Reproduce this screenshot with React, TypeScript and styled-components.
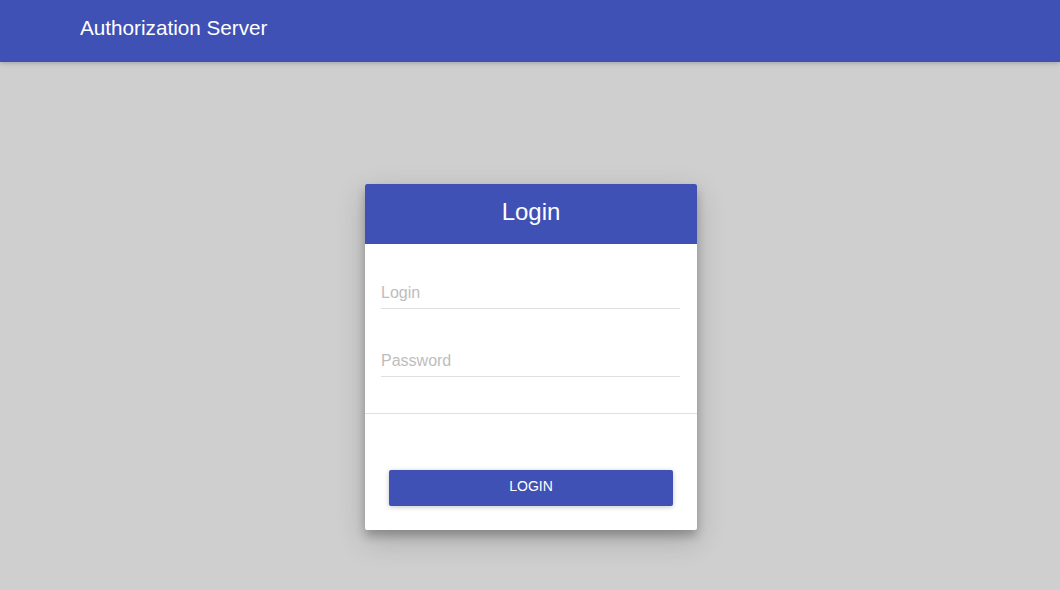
import React from "react";
import styled, { createGlobalStyle } from "styled-components";

const Global = createGlobalStyle`
  html, body { margin: 0; padding: 0; }
  body {
    background: #cfcfcf;
    font-family: "Liberation Sans", Arial, sans-serif;
  }
`;

const Page = styled.div`
  min-height: 590px;
  display: flex;
  flex-direction: column;
`;

const AppBar = styled.header`
  height: 62px;
  background: #3f51b5;
  box-shadow: 0 1px 6px rgba(0, 0, 0, 0.12), 0 1px 4px rgba(0, 0, 0, 0.12);
  display: flex;
  align-items: center;
  padding: 0 0 6px 80px;
  box-sizing: border-box;
`;

const AppTitle = styled.h1`
  margin: 0;
  font-size: 20.7px;
  font-weight: 400;
  color: #fff;
`;

const Main = styled.main`
  display: flex;
  justify-content: center;
  padding: 122px 0 0 2px;
`;

const Card = styled.div`
  width: 332px;
  background: #fff;
  border-radius: 2px;
  box-shadow: 0 10px 30px rgba(0, 0, 0, 0.19), 0 6px 10px rgba(0, 0, 0, 0.23);
  overflow: hidden;
`;

const CardHeader = styled.div`
  height: 60px;
  background: #3f51b5;
  color: #fff;
  font-size: 24px;
  display: flex;
  align-items: center;
  justify-content: center;
  padding-bottom: 4px;
  box-sizing: border-box;
`;

const Fields = styled.div`
  display: flex;
  flex-direction: column;
  gap: 20px;
  padding: 17px 17px 36px 16px;
`;

const Field = styled.label`
  height: 48px;
  display: flex;
  flex-direction: column;
  justify-content: flex-end;
  border-bottom: 1px solid #e0e0e0;
  box-sizing: border-box;
`;

const Input = styled.input`
  border: none;
  outline: none;
  padding: 0 0 3px 0;
  height: 24px;
  font-family: inherit;
  font-size: 16px;
  color: rgba(0, 0, 0, 0.87);
  background: transparent;
  &::placeholder {
    color: #bdbdbd;
  }
`;

const Divider = styled.hr`
  margin: 0;
  border: none;
  height: 1px;
  background: #e0e0e0;
`;

const Actions = styled.div`
  padding: 56px 24px 24px;
`;

const Button = styled.button`
  width: 100%;
  height: 36px;
  border: none;
  border-radius: 2px;
  background: #3f51b5;
  color: #fff;
  font-family: inherit;
  font-size: 14px;
  font-weight: 400;
  text-transform: uppercase;
  padding: 0 0 5px;
  box-shadow: 0 1px 6px rgba(0, 0, 0, 0.12), 0 1px 4px rgba(0, 0, 0, 0.12);
  cursor: pointer;
`;

export default function App() {
  return (
    <Page>
      <Global />
      <AppBar>
        <AppTitle>Authorization Server</AppTitle>
      </AppBar>
      <Main>
        <Card>
          <CardHeader>Login</CardHeader>
          <Fields>
            <Field>
              <Input placeholder="Login" />
            </Field>
            <Field>
              <Input type="password" placeholder="Password" />
            </Field>
          </Fields>
          <Divider />
          <Actions>
            <Button>Login</Button>
          </Actions>
        </Card>
      </Main>
    </Page>
  );
}
